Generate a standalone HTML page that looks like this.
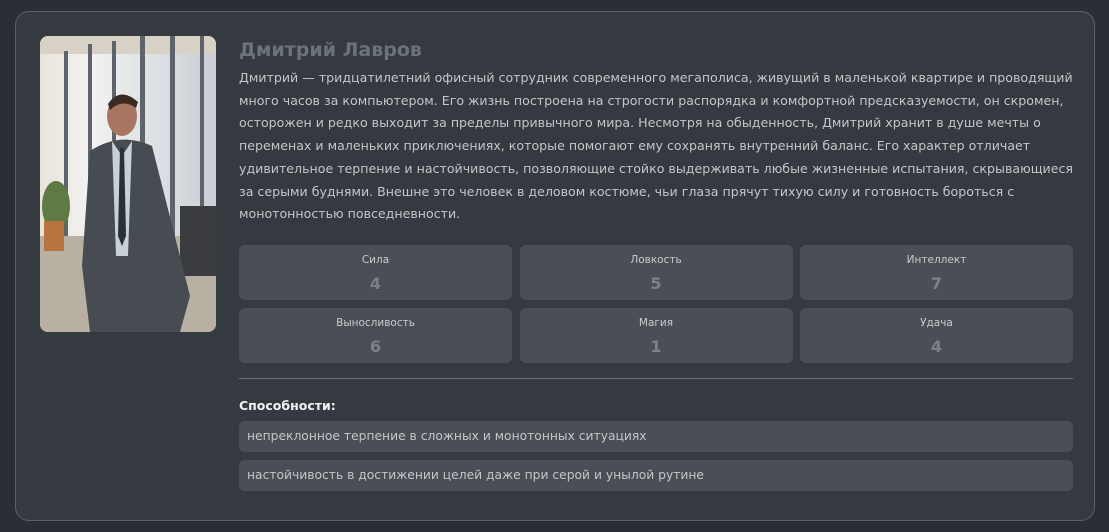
<!DOCTYPE html>
<html><head><meta charset="utf-8"><style>
*{box-sizing:border-box;margin:0;padding:0}
body{width:1109px;height:532px;background:#2a2e36;font-family:"DejaVu Sans","Liberation Sans",sans-serif;overflow:hidden;position:relative}
.card{position:absolute;left:15px;top:11px;width:1080px;height:510px;background:#353940;border:1px solid #5c6068;border-radius:14px}
.img{position:absolute;left:40px;top:36px;width:176px;height:296px;border-radius:8px;overflow:hidden;background:linear-gradient(90deg,#e8e4dc 0%,#f2f2f0 30%,#dfe3e6 60%,#c9cfd4 100%)}
.content{position:absolute;left:239px;top:36px;width:834px}
h1{font-size:19px;font-weight:bold;color:#6c727a;height:28px;line-height:28px}
p{font-size:12.6px;line-height:22.7px;color:#c4c6c8;margin-top:3px;height:178px;letter-spacing:0}
.stats{display:grid;grid-template-columns:273px 273px 273px;column-gap:7.5px;row-gap:8px}
.s{background:#4a4f56;border-radius:6px;height:55px;text-align:center;color:#c9cbcc;font-size:10.5px;padding-top:9px}
.s b{display:block;color:#7c8188;font-size:16px;margin-top:8px}
hr{border:0;border-top:1px solid #6e6f70;margin-top:15px}
h3{font-size:12.5px;font-weight:bold;color:#f2f2f2;margin-top:19px;height:15px}
.ab{background:#4a4f56;border-radius:5px;height:31px;line-height:31px;padding-left:8px;color:#c4c6c8;font-size:12.3px;margin-top:8px}
</style></head><body>
<div class="card"></div>
<div class="img"><svg width="176" height="296">
<rect x="0" y="0" width="176" height="18" fill="#d8d2c6"/>
<g fill="#5d646c"><rect x="24" y="15" width="4" height="230"/><rect x="48" y="8" width="4" height="240"/><rect x="72" y="5" width="4" height="240"/><rect x="100" y="0" width="5" height="240"/><rect x="130" y="0" width="5" height="240"/><rect x="160" y="0" width="4" height="240"/></g>
<rect x="0" y="200" width="176" height="96" fill="#b8b0a2"/>
<rect x="140" y="170" width="36" height="70" fill="#3a3c40"/>
<ellipse cx="16" cy="170" rx="14" ry="25" fill="#5f7a45"/><rect x="4" y="185" width="20" height="30" fill="#b8743e"/>
<ellipse cx="82" cy="80" rx="15" ry="20" fill="#a77560"/>
<path d="M68 68 Q80 50 98 66 L96 72 Q82 62 70 74Z" fill="#3a2a20"/>
<path d="M50 115 Q80 95 112 110 L150 260 L140 296 L50 296 L42 230Z" fill="#474c52"/>
<path d="M72 105 L82 120 L92 105 L88 220 L76 220Z" fill="#c6d2d6"/>
<path d="M80 112 L84 112 L86 200 L82 210 L78 200Z" fill="#2a3038"/>
</svg></div>
<div class="content">
<h1>Дмитрий Лавров</h1>
<p>Дмитрий — тридцатилетний офисный сотрудник современного мегаполиса, живущий в маленькой квартире и проводящий много часов за компьютером. Его жизнь построена на строгости распорядка и комфортной предсказуемости, он скромен, осторожен и редко выходит за пределы привычного мира. Несмотря на обыденность, Дмитрий хранит в душе мечты о переменах и маленьких приключениях, которые помогают ему сохранять внутренний баланс. Его характер отличает удивительное терпение и настойчивость, позволяющие стойко выдерживать любые жизненные испытания, скрывающиеся за серыми буднями. Внешне это человек в деловом костюме, чьи глаза прячут тихую силу и готовность бороться с монотонностью повседневности.</p>
<div class="stats">
<div class="s">Сила<b>4</b></div><div class="s">Ловкость<b>5</b></div><div class="s">Интеллект<b>7</b></div>
<div class="s">Выносливость<b>6</b></div><div class="s">Магия<b>1</b></div><div class="s">Удача<b>4</b></div>
</div>
<hr>
<h3>Способности:</h3>
<div class="ab">непреклонное терпение в сложных и монотонных ситуациях</div>
<div class="ab">настойчивость в достижении целей даже при серой и унылой рутине</div>
</div>
</body></html>
